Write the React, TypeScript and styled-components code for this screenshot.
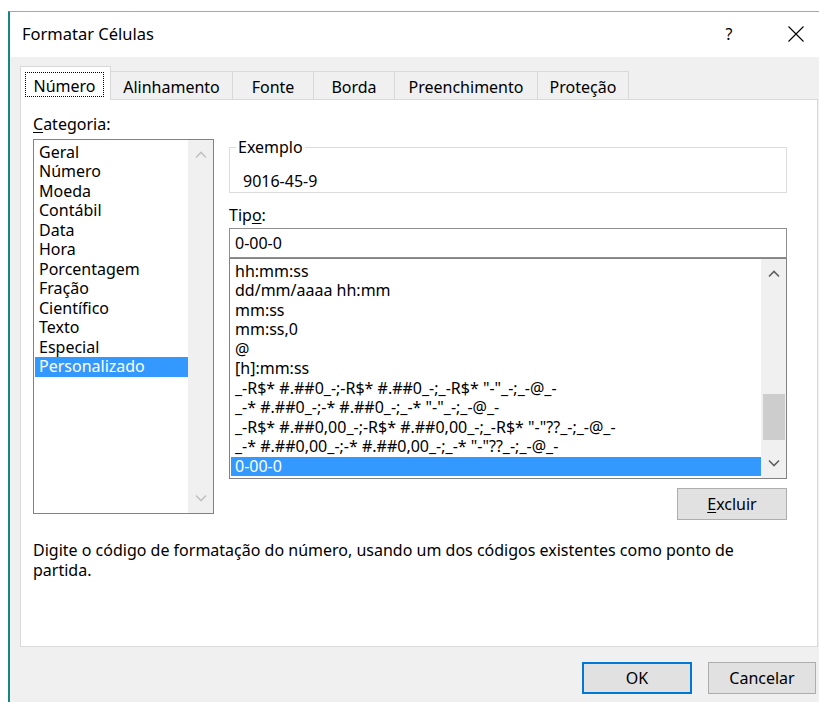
import React from "react";
import styled, { createGlobalStyle } from "styled-components";

const GlobalStyle = createGlobalStyle`
  html, body {
    margin: 0;
    padding: 0;
    background: #ffffff;
  }
  body {
    font-family: "Noto Sans", "Open Sans", sans-serif;
    font-size: 16px;
    color: #000000;
  }
  * {
    box-sizing: border-box;
  }
`;

const Page = styled.div`
  height: 702px;
  padding: 11px 0 0 8px;
  overflow: hidden;
`;

const Window = styled.div`
  height: 691px;
  display: flex;
  flex-direction: column;
  border-top: 1px solid #74c0b6;
  border-left: 2px solid #14887c;
`;

const TitleBar = styled.div`
  flex: none;
  height: 45px;
  display: flex;
  align-items: center;
  background: #ffffff;
  padding: 0 0 2px 12px;
`;

const Title = styled.div`
  flex: 1;
  font-size: 16.5px;
  line-height: 20px;
`;

const CaptionButton = styled.div<{ $gap?: number }>`
  width: 46px;
  height: 43px;
  margin-left: ${(p) => p.$gap ?? 0}px;
  display: flex;
  align-items: center;
  justify-content: center;
  font-size: 16px;
`;

const Body = styled.div`
  flex: 1;
  display: flex;
  flex-direction: column;
  background: #f0f0f0;
  padding: 10px 1px 0 10px;
`;

const TabStrip = styled.div`
  height: 32px;
  display: flex;
  align-items: flex-end;
  position: relative;
  z-index: 1;
`;

const Tab = styled.div<{ $w: number; $active?: boolean }>`
  width: ${(p) => p.$w}px;
  height: ${(p) => (p.$active ? 34 : 28)}px;
  margin-right: -1px;
  margin-bottom: ${(p) => (p.$active ? -1 : 0)}px;
  border: 1px solid #d9d9d9;
  border-bottom: none;
  background: ${(p) => (p.$active ? "#ffffff" : "#f0f0f0")};
  position: relative;
  z-index: ${(p) => (p.$active ? 2 : 1)};
  display: flex;
  align-items: ${(p) => (p.$active ? "flex-start" : "center")};
  justify-content: ${(p) => (p.$active ? "flex-start" : "center")};
  padding: ${(p) => (p.$active ? "5px 0 0 4px" : "2px 0 0 0")};
  line-height: 20px;
`;

const FocusRing = styled.span`
  width: 79px;
  height: 25px;
  border: 1px dotted #000000;
  display: flex;
  align-items: center;
  justify-content: center;
  padding-top: 2px;
`;

const Panel = styled.div`
  height: 548px;
  flex: none;
  background: #ffffff;
  border: 1px solid #d9d9d9;
  padding: 14px 12px 0 12px;
  display: flex;
  flex-direction: column;
`;

const Columns = styled.div`
  display: flex;
  gap: 15px;
  align-items: flex-start;
`;

const LeftColumn = styled.div`
  width: 181px;
  display: flex;
  flex-direction: column;
`;

const RightColumn = styled.div`
  width: 558px;
  display: flex;
  flex-direction: column;
  padding-top: 23px;
`;

const FieldLabel = styled.div<{ $gap: number; $mt?: number }>`
  line-height: 20px;
  margin-top: ${(p) => p.$mt ?? 0}px;
  margin-bottom: ${(p) => p.$gap}px;
`;

const Mnemonic = styled.span`
  text-decoration: underline;
  text-underline-offset: 2px;
`;

const ListBox = styled.div<{ $h: number }>`
  height: ${(p) => p.$h}px;
  border: 1px solid #828282;
  background: #ffffff;
  display: flex;
  overflow: hidden;
`;

const Items = styled.div`
  flex: 1;
  min-width: 0;
  padding-top: 2.5px;
  overflow: hidden;
`;

const Item = styled.div<{ $selected?: boolean }>`
  height: 19.5px;
  line-height: 19.5px;
  margin-left: 1px;
  padding-left: 4px;
  white-space: nowrap;
  background: ${(p) => (p.$selected ? "#3399ff" : "transparent")};
  color: ${(p) => (p.$selected ? "#ffffff" : "#000000")};
`;

const ScrollBar = styled.div`
  width: 25px;
  flex: none;
  background: #f0f0f0;
  display: flex;
  flex-direction: column;
`;

const ScrollButton = styled.div`
  height: 30px;
  flex: none;
  display: flex;
  align-items: center;
  justify-content: center;
`;

const Track = styled.div`
  flex: 1;
  display: flex;
  flex-direction: column;
  align-items: center;
`;

const Thumb = styled.div<{ $offset: number; $h: number }>`
  width: 22px;
  height: ${(p) => p.$h}px;
  margin-top: ${(p) => p.$offset}px;
  background: #cdcdcd;
`;

const GroupBox = styled.fieldset`
  margin: 0;
  padding: 0 0 1px 6px;
  min-width: 0;
  border: 1px solid #dcdcdc;
`;

const Legend = styled.legend`
  padding: 0 2px;
  line-height: 20px;
`;

const Sample = styled.div`
  margin: 14px 0 0 7px;
  line-height: 20px;
`;

const TextInput = styled.div`
  height: 30px;
  margin-top: 3px;
  border: 1px solid #8f8f8f;
  background: #ffffff;
  display: flex;
  align-items: center;
  padding-left: 5px;
`;

const PushButton = styled.div<{ $w: number; $default?: boolean }>`
  width: ${(p) => p.$w}px;
  height: 32px;
  flex: none;
  background: #e1e1e1;
  border: ${(p) => (p.$default ? "2px solid #0078d7" : "1px solid #adadad")};
  display: flex;
  align-items: center;
  justify-content: center;
  line-height: 20px;
`;

const SideButton = styled(PushButton)`
  align-self: flex-end;
  margin-top: 9px;
`;

const Description = styled.div`
  margin-top: 20px;
  line-height: 20px;
  max-width: 760px;
`;

const ButtonRow = styled.div`
  display: flex;
  justify-content: flex-end;
  gap: 16px;
  margin-top: 15px;
  padding-right: 2px;
`;

const Chevron = ({ down, color }: { down?: boolean; color: string }) => (
  <svg width="12" height="8" viewBox="0 0 12 8">
    <path
      d={down ? "M1 1.5 L6 6.5 L11 1.5" : "M1 6.5 L6 1.5 L11 6.5"}
      fill="none"
      stroke={color}
      strokeWidth="1.6"
    />
  </svg>
);

const CloseIcon = () => (
  <svg width="16" height="16" viewBox="0 0 16 16">
    <path d="M0.5 0.5 L15.5 15.5 M15.5 0.5 L0.5 15.5" stroke="#000" strokeWidth="1.1" />
  </svg>
);

const tabs = [
  { label: "Número", w: 91 },
  { label: "Alinhamento", w: 123 },
  { label: "Fonte", w: 82 },
  { label: "Borda", w: 82 },
  { label: "Preenchimento", w: 144 },
  { label: "Proteção", w: 92 },
];

const categories = [
  "Geral",
  "Número",
  "Moeda",
  "Contábil",
  "Data",
  "Hora",
  "Porcentagem",
  "Fração",
  "Científico",
  "Texto",
  "Especial",
  "Personalizado",
];

const formats = [
  "hh:mm:ss",
  "dd/mm/aaaa hh:mm",
  "mm:ss",
  "mm:ss,0",
  "@",
  "[h]:mm:ss",
  '_-R$* #.##0_-;-R$* #.##0_-;_-R$* "-"_-;_-@_-',
  '_-* #.##0_-;-* #.##0_-;_-* "-"_-;_-@_-',
  '_-R$* #.##0,00_-;-R$* #.##0,00_-;_-R$* "-"??_-;_-@_-',
  '_-* #.##0,00_-;-* #.##0,00_-;_-* "-"??_-;_-@_-',
  "0-00-0",
];

export default function App() {
  return (
    <>
      <GlobalStyle />
      <Page>
        <Window>
          <TitleBar>
            <Title>Formatar Células</Title>
            <CaptionButton>?</CaptionButton>
            <CaptionButton $gap={21}>
              <CloseIcon />
            </CaptionButton>
          </TitleBar>
          <Body>
            <TabStrip>
              {tabs.map((t, i) => (
                <Tab key={t.label} $w={t.w} $active={i === 0}>
                  {i === 0 ? <FocusRing>{t.label}</FocusRing> : t.label}
                </Tab>
              ))}
            </TabStrip>
            <Panel>
              <Columns>
                <LeftColumn>
                  <FieldLabel $gap={5}>
                    <Mnemonic>C</Mnemonic>ategoria:
                  </FieldLabel>
                  <ListBox $h={375}>
                    <Items>
                      {categories.map((c) => (
                        <Item key={c} $selected={c === "Personalizado"}>
                          {c}
                        </Item>
                      ))}
                    </Items>
                    <ScrollBar>
                      <ScrollButton>
                        <Chevron color="#c2c2c2" />
                      </ScrollButton>
                      <Track />
                      <ScrollButton>
                        <Chevron down color="#c2c2c2" />
                      </ScrollButton>
                    </ScrollBar>
                  </ListBox>
                </LeftColumn>
                <RightColumn>
                  <GroupBox>
                    <Legend>Exemplo</Legend>
                    <Sample>9016-45-9</Sample>
                  </GroupBox>
                  <FieldLabel $gap={0} $mt={12}>
                    Tip<Mnemonic>o</Mnemonic>:
                  </FieldLabel>
                  <TextInput>0-00-0</TextInput>
                  <ListBox $h={221}>
                    <Items>
                      {formats.map((f, i) => (
                        <Item key={f} $selected={i === formats.length - 1}>
                          {f}
                        </Item>
                      ))}
                    </Items>
                    <ScrollBar>
                      <ScrollButton>
                        <Chevron color="#606060" />
                      </ScrollButton>
                      <Track>
                        <Thumb $offset={105} $h={46} />
                      </Track>
                      <ScrollButton>
                        <Chevron down color="#606060" />
                      </ScrollButton>
                    </ScrollBar>
                  </ListBox>
                  <SideButton $w={110}>
                    <Mnemonic>E</Mnemonic>xcluir
                  </SideButton>
                </RightColumn>
              </Columns>
              <Description>
                Digite o código de formatação do número, usando um dos códigos existentes como ponto de partida.
              </Description>
            </Panel>
            <ButtonRow>
              <PushButton $w={110} $default>
                OK
              </PushButton>
              <PushButton $w={108}>Cancelar</PushButton>
            </ButtonRow>
          </Body>
        </Window>
      </Page>
    </>
  );
}
